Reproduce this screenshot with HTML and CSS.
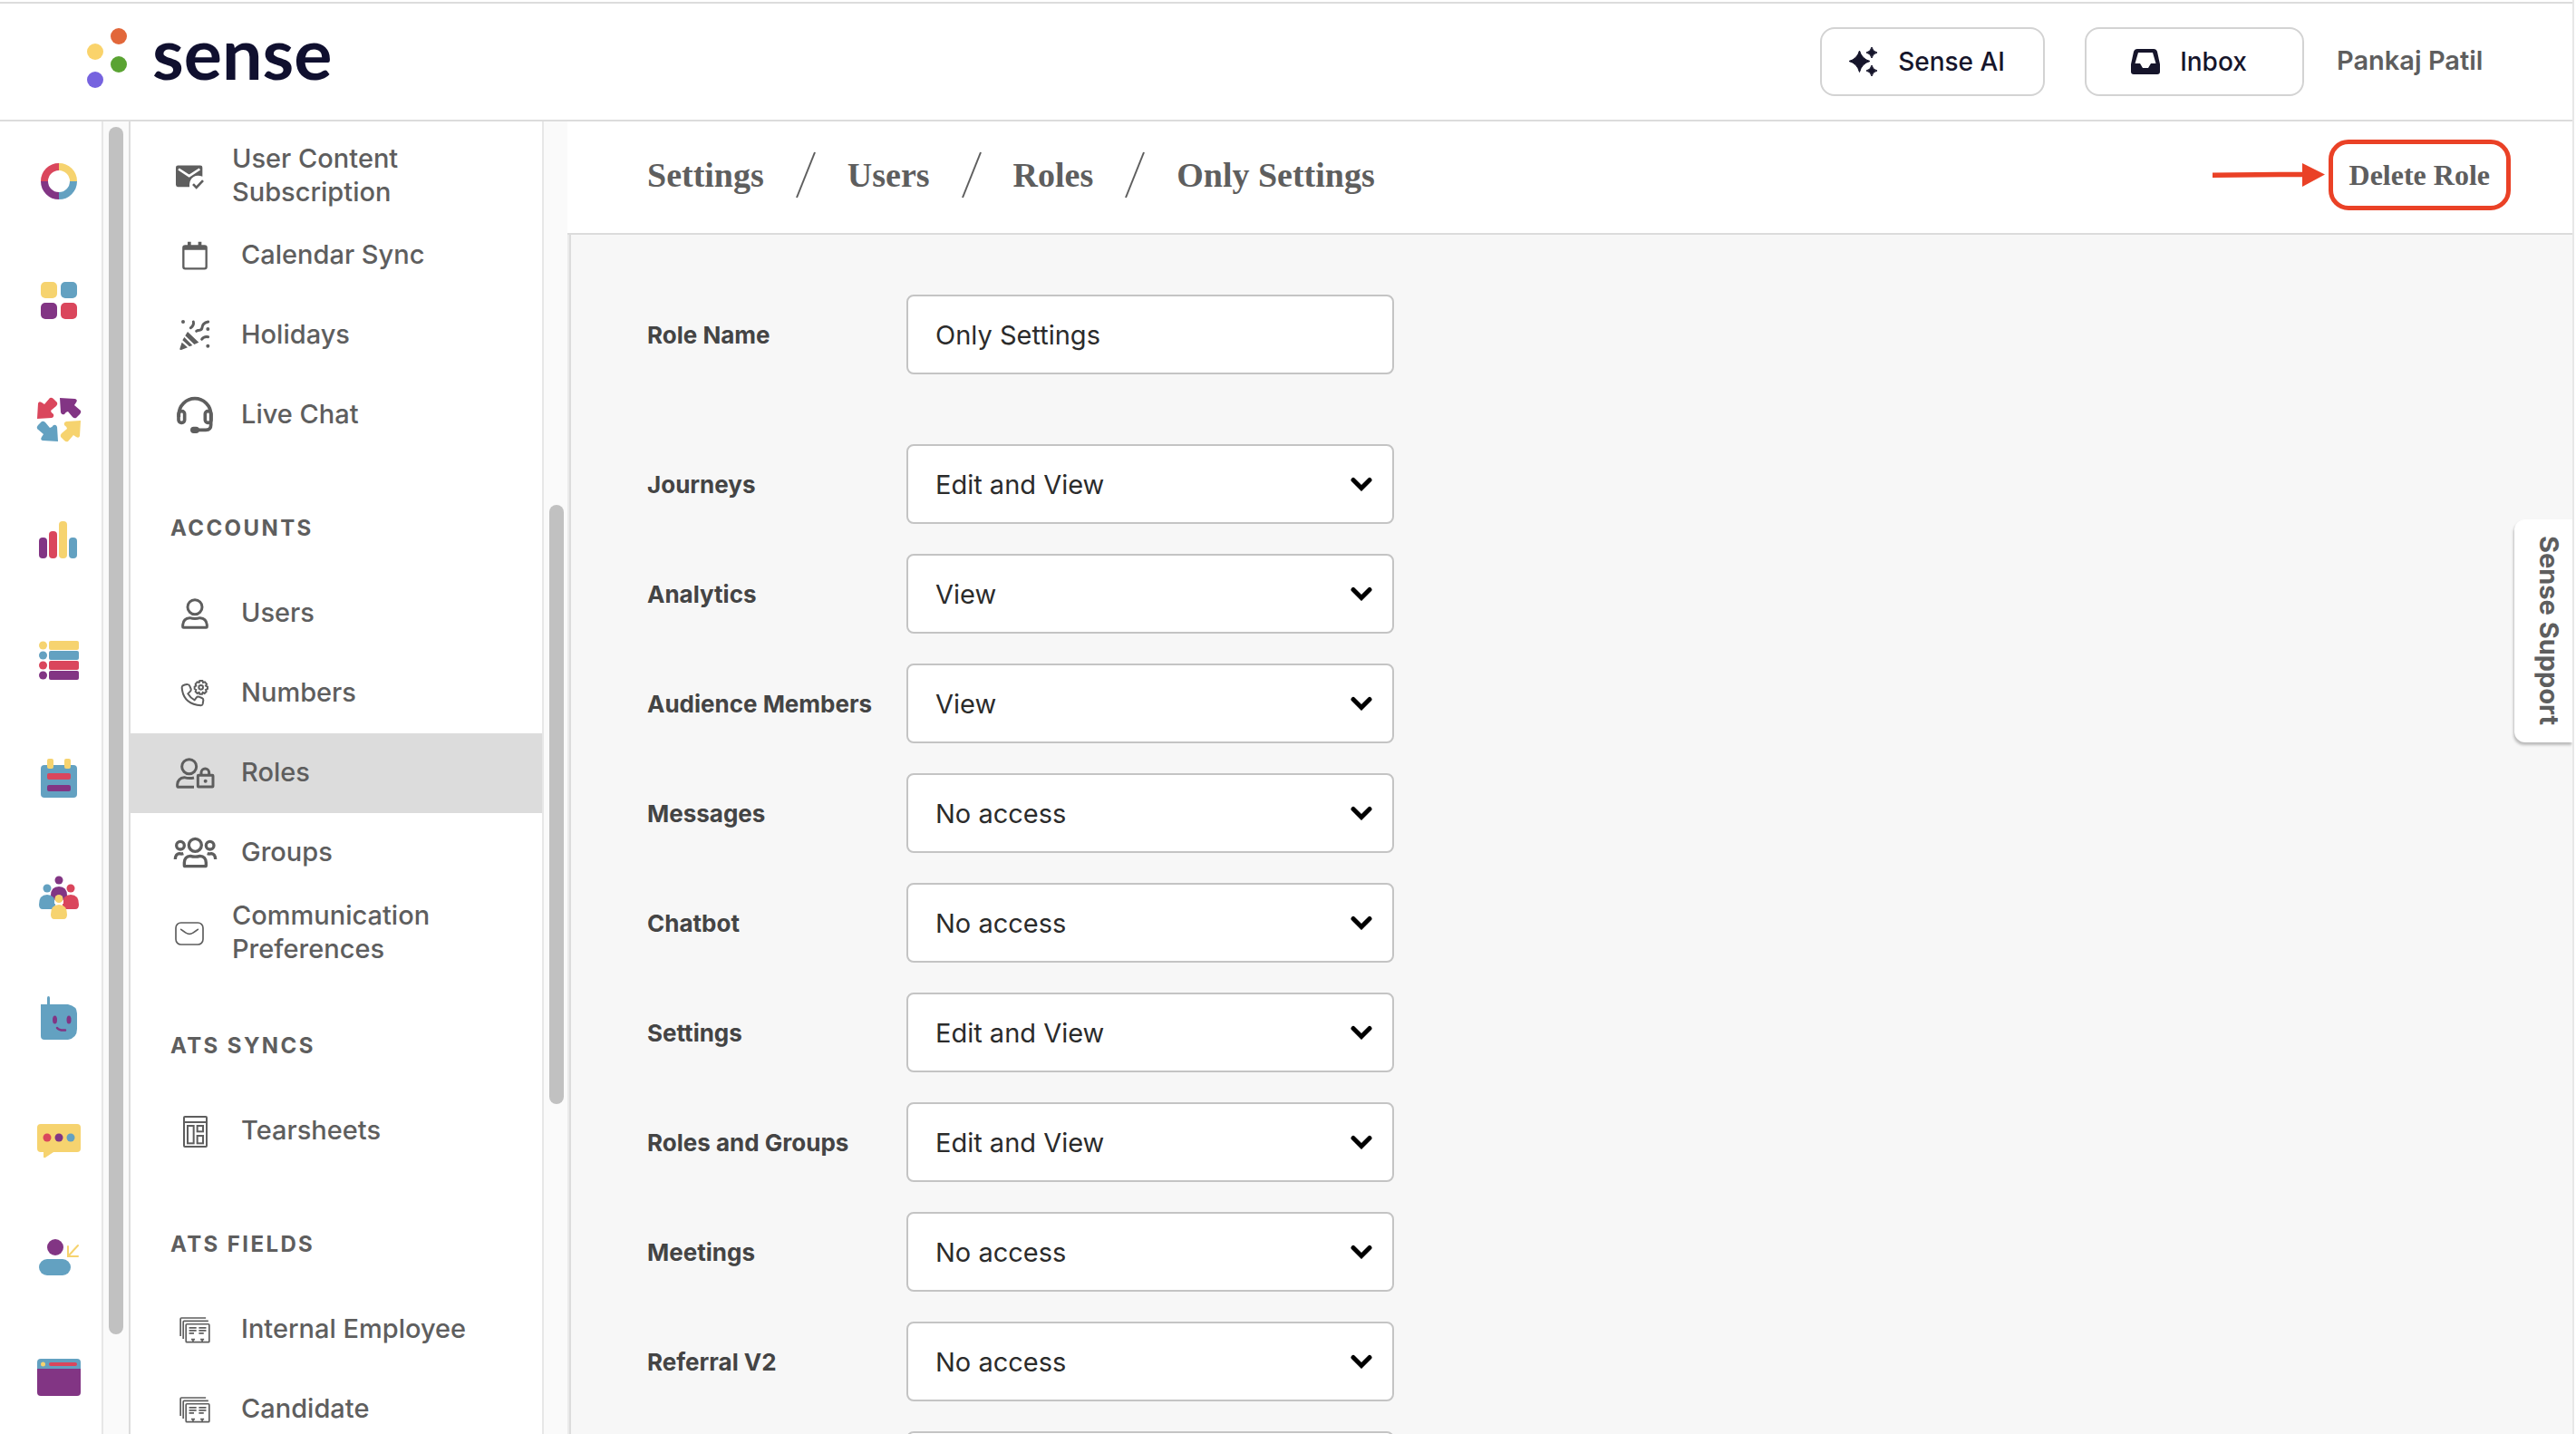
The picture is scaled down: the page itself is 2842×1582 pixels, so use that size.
FILE: index.html
```html
<!DOCTYPE html>
<html lang="en">
  <head>
    <meta charset="UTF-8" />
    <meta name="viewport" content="width=device-width, initial-scale=1.0" />
    <title>Sense - Only Settings</title>
    <link rel="stylesheet" href="styles.css">
  </head>
  <body>
    <svg class="symbols" aria-hidden="true">
      <symbol id="chevron" viewBox="0 0 24 16">
        <path d="M3 3.500 12 12.500 21 3.500" fill="none" stroke="#000" stroke-width="5" stroke-linecap="round" />
      </symbol>
      <symbol id="records" viewBox="0 0 100 86">
        <g fill="none" stroke="currentColor" stroke-width="5">
          <path d="M3 62V6q0-3 3-3h80M12 71V16q0-3 3-3h79" />
          <rect x="21" y="23" width="76" height="59" rx="3" />
          <path d="M31 35h24M31 44h24M31 53h16M63 35h24M63 44h24M63 53h16" />
          <path d="M38 73h12M44 73v9M68 73h12M74 73v9" />
        </g>
      </symbol>
      <path id="arrow" d="M14-1q2-1 4 1l4 4q1 2-1 4l-6 5q0 2 3 4 1 3-2 4L0 22 1 5q1-3 4-1l3 2z" />
    </svg>

    <div class="app">
      <header class="header">
        <a class="logo" href="#">
          <svg width="46" height="68" viewBox="0 0 46 68" aria-hidden="true">
            <circle cx="35" cy="10" r="9" fill="#e2673a" />
            <circle cx="9" cy="27" r="9" fill="#fad36b" />
            <circle cx="35" cy="41" r="9" fill="#5aa332" />
            <circle cx="9" cy="58" r="9" fill="#7663df" />
          </svg>
          <span class="logo-text">sense</span>
        </a>
        <div class="header-actions">
          <button type="button" class="header-btn">
            <svg width="32" height="32" viewBox="0 0 32 32" fill="#16152b" aria-hidden="true">
              <path d="M11.500 4q2.500 9 11.500 11.500-9 2.500-11.500 12-2.500-9.500-11.500-12 9-2.500 11.500-11.500z" stroke="#16152b" />
              <path d="M25 0q1 5 6 6-5 1-6 6-1-5-6-6 5-1 6-6zM25 20q1 5 6 6-5 1-6 6-1-5-6-6 5-1 6-6z" stroke="#16152b" />
            </svg>
            Sense AI
          </button>
          <button type="button" class="header-btn">
            <svg width="32" height="28" viewBox="0 0 32 28" aria-hidden="true">
              <path d="M7 0h18q3 0 4 3l3 14v8q0 3-3 3H3q-3 0-3-3v-8L3 3q1-3 4-3z" fill="#16152b" />
              <path d="M8 4h16l3.500 12H22l-3 5h-6l-3-5H4.500z" fill="#fff" />
            </svg>
            Inbox
          </button>
          <span class="user-name">Pankaj Patil</span>
        </div>
      </header>

      <div class="body">
        <nav class="rail" aria-label="Products">
          <a href="#" aria-label="Home">
            <svg viewBox="0 0 48 48" fill="none" stroke-width="8">
              <path d="M8 24a16 16 0 0 1 16-16" stroke="#da465c" />
              <path d="M24 8a16 16 0 0 1 16 16" stroke="#f6d36f" />
              <path d="M40 24a16 16 0 0 1-16 16" stroke="#63a1c1" />
              <path d="M24 40a16 16 0 0 1-16-16" stroke="#823584" />
            </svg>
          </a>
          <a href="#" aria-label="Dashboard">
            <svg viewBox="0 0 48 48">
              <rect x="4" y="3" width="18" height="18" rx="5" fill="#f6d36f" />
              <rect x="26" y="3" width="18" height="18" rx="5" fill="#63a1c1" />
              <rect x="4" y="26" width="18" height="18" rx="5" fill="#823584" />
              <rect x="26" y="26" width="18" height="18" rx="5" fill="#da465c" />
            </svg>
          </a>
          <a href="#" aria-label="Journeys">
            <svg viewBox="0 0 48 48">
              <use href="#arrow" fill="#da465c" />
              <use href="#arrow" fill="#823584" transform="rotate(90 24 23)" />
              <use href="#arrow" fill="#f6d36f" transform="rotate(180 24 23)" />
              <use href="#arrow" fill="#63a1c1" transform="rotate(270 24 23)" />
            </svg>
          </a>
          <a href="#" aria-label="Analytics">
            <svg viewBox="0 0 48 48">
              <rect x="2" y="21" width="9" height="23" rx="4" fill="#823584" />
              <rect x="13" y="14" width="9" height="30" rx="4" fill="#da465c" />
              <rect x="24" y="3" width="9" height="41" rx="4" fill="#f6d36f" />
              <rect x="35" y="21" width="9" height="23" rx="4" fill="#63a1c1" />
            </svg>
          </a>
          <a href="#" aria-label="Audience">
            <svg viewBox="0 0 48 48">
              <g fill="#f6d36f"><circle cx="6.500" cy="8" r="4.500" /><rect x="13" y="3" width="33" height="10" rx="2" /></g>
              <g fill="#63a1c1"><circle cx="6.500" cy="19" r="4.500" /><rect x="13" y="14" width="33" height="10" rx="2" /></g>
              <g fill="#da465c"><circle cx="6.500" cy="30" r="4.500" /><rect x="13" y="25" width="33" height="10" rx="2" /></g>
              <g fill="#823584"><circle cx="6.500" cy="41" r="4.500" /><rect x="13" y="36" width="33" height="10" rx="2" /></g>
            </svg>
          </a>
          <a href="#" aria-label="Meetings">
            <svg viewBox="0 0 48 48">
              <rect x="4" y="8" width="40" height="36" rx="4" fill="#63a1c1" />
              <rect x="11" y="1" width="7" height="11" rx="2" fill="#f6d36f" />
              <rect x="30" y="1" width="7" height="11" rx="2" fill="#f6d36f" />
              <rect x="11" y="17" width="26" height="7" rx="2" fill="#da465c" />
              <rect x="11" y="30" width="26" height="7" rx="2" fill="#823584" />
            </svg>
          </a>
          <a href="#" aria-label="Groups">
            <svg viewBox="0 0 48 48">
              <circle cx="24" cy="3" r="4.500" fill="#823584" />
              <path d="M15 26v-6q0-10 9-10t9 10v6z" fill="#823584" />
              <circle cx="11" cy="12" r="4.500" fill="#63a1c1" />
              <path d="M2 30q0-11 9-11t9 11q0 5-4 5H6q-4 0-4-5z" fill="#63a1c1" />
              <circle cx="37" cy="12" r="4.500" fill="#da465c" />
              <path d="M28 30q0-11 9-11t9 11q0 5-4 5H32q-4 0-4-5z" fill="#da465c" />
              <path d="M19 24q5 8 10 0v5H19z" fill="#fff" />
              <circle cx="24" cy="23.500" r="4.500" fill="#f6d36f" />
              <path d="M15 41q0-11 9-11t9 11q0 5-4 5H19q-4 0-4-5z" fill="#f6d36f" />
            </svg>
          </a>
          <a href="#" aria-label="Chatbot">
            <svg viewBox="0 0 48 48">
              <path d="M11 8V1q0-2 1.500-2T14 1v7h20q10 2 10 10v17q0 10-10 12H8q-4 0-4-4V8z" fill="#63a1c1" />
              <ellipse cx="19.500" cy="25" rx="2.500" ry="4.500" fill="#823584" />
              <ellipse cx="35" cy="25" rx="2.500" ry="4.500" fill="#823584" />
              <path d="M22 34q2 3 9 2.500" fill="none" stroke="#823584" stroke-width="2.500" stroke-linecap="round" />
            </svg>
          </a>
          <a href="#" aria-label="Messages">
            <svg viewBox="0 0 48 48">
              <path d="M4 8h40q4 0 4 4v23q0 4-4 4H18L9 45q-2 1-2-1v-5H4q-4 0-4-4V12q0-4 4-4z" fill="#f6d36f" />
              <circle cx="11" cy="23" r="4.500" fill="#da465c" />
              <circle cx="24" cy="23" r="4.500" fill="#823584" />
              <circle cx="37" cy="23" r="4.500" fill="#63a1c1" />
            </svg>
          </a>
          <a href="#" aria-label="Referrals">
            <svg viewBox="0 0 48 48">
              <circle cx="20" cy="12" r="9" fill="#823584" />
              <rect x="2" y="25" width="35" height="18" rx="9" fill="#63a1c1" />
              <path d="M34 11v11h11M34 22 45 10" fill="none" stroke="#f6d36f" stroke-width="2" stroke-linecap="round" />
            </svg>
          </a>
          <a href="#" aria-label="Pages">
            <svg viewBox="0 0 48 48">
              <path d="M0 14V7q0-4 4-4h40q4 0 4 4v7z" fill="#63a1c1" />
              <path d="M0 14h48v26q0 4-4 4H4q-4 0-4-4z" fill="#823584" />
              <circle cx="6.500" cy="9" r="2.500" fill="#f6d36f" />
              <rect x="13" y="7" width="31" height="4" rx="2" fill="#da465c" />
            </svg>
          </a>
        </nav>
        <div class="scroll-track rail-track"><div class="scroll-thumb"></div></div>

        <nav class="sidebar" aria-label="Settings">
          <a class="item two-line" href="#">
            <span class="icon">
              <svg width="31" height="27" viewBox="0 0 93 80">
                <path d="M7 1h74q7 0 7 7v30q-16-7-30 1-14 9-13 33H7q-7 0-7-7V8q0-7 7-7z" fill="currentColor" />
                <path d="M9 13 44 36 79 13" fill="none" stroke="#fff" stroke-width="8" />
                <path d="M57 63 68 74 90 51" fill="none" stroke="currentColor" stroke-width="8" />
              </svg>
            </span>
            <span>User Content<br>Subscription</span>
          </a>
          <a class="item" href="#">
            <span class="icon">
              <svg width="28" height="32" viewBox="0 0 84 94">
                <rect x="4" y="15" width="76" height="75" rx="6" fill="none" stroke="currentColor" stroke-width="7" />
                <path d="M4 14h76v14H4zM18 1h11v15H18zM53 1h11v15H53z" fill="currentColor" />
              </svg>
            </span>
            Calendar Sync
          </a>
          <a class="item" href="#">
            <span class="icon">
              <svg width="34" height="34" viewBox="0 0 102 102">
                <path d="M27 39 64 74 49 81 19 52zM16 57 43 84 33 88 10 67zM8 74 27 91 6 99Q-1 100 2 92z" fill="currentColor" />
                <g fill="none" stroke="currentColor" stroke-width="9" stroke-linecap="round">
                  <path d="M46 6q3 12-9 20M56 37q5-3 10-3 8-1 9-9 1-15 20-19M74 64q6-10 21-8" />
                </g>
                <circle cx="12" cy="6" r="6" fill="currentColor" />
                <circle cx="94" cy="30" r="6" fill="currentColor" />
                <circle cx="94" cy="86" r="6" fill="currentColor" />
              </svg>
            </span>
            Holidays
          </a>
          <a class="item" href="#">
            <span class="icon">
              <svg width="40" height="40" viewBox="0 0 120 120">
                <g fill="none" stroke="currentColor" stroke-width="11">
                  <path d="M7 66V58a53 53 0 0 1 106 0V92q0 17-17 17H60" />
                  <rect x="6" y="47" width="20" height="38" rx="9" />
                  <rect x="94" y="47" width="20" height="38" rx="9" />
                </g>
                <rect x="45" y="98" width="30" height="22" rx="11" fill="currentColor" />
              </svg>
            </span>
            Live Chat
          </a>

          <h2 class="section">Accounts</h2>
          <a class="item" href="#">
            <span class="icon">
              <svg width="30" height="34" viewBox="0 0 90 102" fill="none" stroke="currentColor" stroke-width="9">
                <circle cx="45" cy="29" r="24" />
                <path d="M5 94V88Q7 66 28 65q17 5 34 0 21 1 23 23v6q0 3-3 3H8q-3 0-3-3z" />
              </svg>
            </span>
            Users
          </a>
          <a class="item" href="#">
            <span class="icon">
              <svg width="30" height="30" viewBox="0 0 90 90" fill="none" stroke="currentColor" stroke-width="6">
                <path d="M4 20q8-6 17-5 5 0 7 6l4 9q1 5-2 8l-8 8q8 14 22 21l6-8q3-4 8-3l10 4q5 2 5 7l-2 13q-1 5-6 5Q6 80 2 26q0-4 2-6z" />
                <path d="M61 3h9l2 6 6-2 6 7-3 6 6 3v7l-6 3 2 6-6 6-6-3-2 5h-8l-2-5-6 3-6-6 2-6-5-3v-7l5-3-2-6 6-7 6 2z" />
                <circle cx="65" cy="25" r="7" />
              </svg>
            </span>
            Numbers
          </a>
          <a class="item active" href="#" aria-current="page">
            <span class="icon">
              <svg width="43" height="34" viewBox="0 0 129 102" fill="none" stroke="currentColor" stroke-width="9">
                <circle cx="44" cy="29" r="24" />
                <path d="M60 97H9q-4 0-4-4v-5Q7 67 28 65q16 5 32 1" />
                <path d="M84 58V49a13 13 0 0 1 26 0v9" />
                <rect x="73" y="58" width="50" height="38" rx="2" />
                <circle cx="98" cy="77" r="6" fill="currentColor" stroke="none" />
              </svg>
            </span>
            Roles
          </a>
          <a class="item" href="#">
            <span class="icon">
              <svg width="47" height="34" viewBox="0 0 141 102" fill="none" stroke="currentColor" stroke-width="10">
                <circle cx="70" cy="25" r="21" />
                <path d="M34 92V83Q35 62 54 61q16 5 32 0 19 1 20 22v9q0 3-3 3H37q-3 0-3-3z" />
                <circle cx="21" cy="26" r="13" />
                <circle cx="119" cy="26" r="13" />
                <path d="M4 72Q5 54 17 53q8 2 14 0M137 72q-1-18-13-19-8 2-14 0" />
              </svg>
            </span>
            Groups
          </a>
          <a class="item two-line" href="#">
            <span class="icon">
              <svg width="32" height="26" viewBox="0 0 96 78" fill="none" stroke="currentColor" stroke-width="5">
                <rect x="3" y="3" width="90" height="72" rx="17" />
                <path d="M20 25q18 13 22 14 6 2 12 0 4-1 22-14" stroke-linecap="round" />
              </svg>
            </span>
            <span>Communication<br>Preferences</span>
          </a>

          <h2 class="section">ATS Syncs</h2>
          <a class="item" href="#">
            <span class="icon">
              <svg width="27" height="35" viewBox="0 0 81 105" fill="none" stroke="currentColor" stroke-width="6">
                <rect x="3" y="3" width="75" height="99" rx="3" />
                <path d="M3 21h75" />
                <rect x="15" y="33" width="20" height="58" />
                <rect x="47" y="33" width="19" height="19" />
                <rect x="47" y="66" width="19" height="25" />
              </svg>
            </span>
            Tearsheets
          </a>

          <h2 class="section">ATS Fields</h2>
          <a class="item" href="#">
            <span class="icon"><svg width="34" height="29"><use href="#records" /></svg></span>
            Internal Employee
          </a>
          <a class="item" href="#">
            <span class="icon"><svg width="34" height="29"><use href="#records" /></svg></span>
            Candidate
          </a>
        </nav>
        <div class="scroll-track sidebar-track"><div class="scroll-thumb"></div></div>

        <main class="main">
          <div class="title-bar">
            <nav class="breadcrumb" aria-label="Breadcrumb">
              <a href="#">Settings</a>
              <svg width="22" height="52" viewBox="0 0 22 52"><path d="M21 1 1 51" /></svg>
              <a href="#">Users</a>
              <svg width="22" height="52" viewBox="0 0 22 52"><path d="M21 1 1 51" /></svg>
              <a href="#">Roles</a>
              <svg width="22" height="52" viewBox="0 0 22 52"><path d="M21 1 1 51" /></svg>
              <span>Only Settings</span>
            </nav>
            <div class="delete">
              <svg width="124" height="26" viewBox="0 0 124 26" fill="#ea4126" aria-hidden="true">
                <path d="M0 10.500 99 9.500V15L0 16zM99 0 124 12.500 99 26z" />
              </svg>
              <button type="button" class="delete-btn">Delete Role</button>
            </div>
          </div>

          <form class="form">
            <div class="row row-name">
              <label for="role-name">Role Name</label>
              <input class="field" id="role-name" type="text" value="Only Settings">
            </div>
            <div class="row">
              <label for="journeys">Journeys</label>
              <div class="select">
                <select class="field" id="journeys"><option>No access</option><option>View</option><option selected>Edit and View</option></select>
                <svg><use href="#chevron" /></svg>
              </div>
            </div>
            <div class="row">
              <label for="analytics">Analytics</label>
              <div class="select">
                <select class="field" id="analytics"><option>No access</option><option selected>View</option><option>Edit and View</option></select>
                <svg><use href="#chevron" /></svg>
              </div>
            </div>
            <div class="row">
              <label for="audience">Audience Members</label>
              <div class="select">
                <select class="field" id="audience"><option>No access</option><option selected>View</option><option>Edit and View</option></select>
                <svg><use href="#chevron" /></svg>
              </div>
            </div>
            <div class="row">
              <label for="messages">Messages</label>
              <div class="select">
                <select class="field" id="messages"><option selected>No access</option><option>View</option><option>Edit and View</option></select>
                <svg><use href="#chevron" /></svg>
              </div>
            </div>
            <div class="row">
              <label for="chatbot">Chatbot</label>
              <div class="select">
                <select class="field" id="chatbot"><option selected>No access</option><option>View</option><option>Edit and View</option></select>
                <svg><use href="#chevron" /></svg>
              </div>
            </div>
            <div class="row">
              <label for="settings">Settings</label>
              <div class="select">
                <select class="field" id="settings"><option>No access</option><option>View</option><option selected>Edit and View</option></select>
                <svg><use href="#chevron" /></svg>
              </div>
            </div>
            <div class="row">
              <label for="roles">Roles and Groups</label>
              <div class="select">
                <select class="field" id="roles"><option>No access</option><option>View</option><option selected>Edit and View</option></select>
                <svg><use href="#chevron" /></svg>
              </div>
            </div>
            <div class="row">
              <label for="meetings">Meetings</label>
              <div class="select">
                <select class="field" id="meetings"><option selected>No access</option><option>View</option><option>Edit and View</option></select>
                <svg><use href="#chevron" /></svg>
              </div>
            </div>
            <div class="row">
              <label for="referral">Referral V2</label>
              <div class="select">
                <select class="field" id="referral"><option selected>No access</option><option>View</option><option>Edit and View</option></select>
                <svg><use href="#chevron" /></svg>
              </div>
            </div>
            <div class="row row-unlabelled">
              <div class="select">
                <select class="field" aria-label="Pages"><option></option><option>No access</option><option>View</option><option>Edit and View</option></select>
                <svg><use href="#chevron" /></svg>
              </div>
            </div>
          </form>
        </main>
      </div>

      <button type="button" class="support">Sense Support</button>
    </div>
  </body>
</html>
```
FILE: styles.css
```css
* {
  box-sizing: border-box;
}
body {
  margin: 0;
  background-color: #fff;
  color: #5e5e5e;
  font-family: Inter, "Liberation Sans", sans-serif;
  font-size: 29px;
}
a {
  color: inherit;
  text-decoration: none;
}
button {
  background: none;
  cursor: pointer;
  font-family: inherit;
}
svg {
  display: block;
  flex-shrink: 0;
  overflow: visible;
}
.symbols {
  position: absolute;
  width: 0;
  height: 0;
  overflow: hidden;
}
.app {
  position: relative;
  display: flex;
  flex-direction: column;
  height: 100vh;
  padding-top: 2px;
  margin-right: 2px;
  border-right: 2px solid #e7e7e7;
  overflow: hidden;
}

/* header */
.header {
  display: flex;
  align-items: center;
  justify-content: space-between;
  height: 132px;
  flex-shrink: 0;
  padding: 0 96px;
  border-top: 2px solid #dcdcdc;
  border-bottom: 2px solid #dcdcdc;
}
.logo {
  display: flex;
  align-items: center;
  gap: 26px;
  height: 120px;
  padding-bottom: 8px;
  color: #10102f;
}
.logo-text {
  font-family: Lato, sans-serif;
  font-size: 79px;
  font-weight: 700;
  line-height: 90px;
  padding-bottom: 12px;
}
.header-actions {
  display: flex;
  align-items: center;
}
.header-btn {
  display: flex;
  align-items: center;
  justify-content: center;
  gap: 22px;
  min-width: 242px;
  height: 76px;
  margin-right: 44px;
  padding: 0 42px 0 30px;
  border: 2px solid #d3d3d3;
  border-radius: 16px;
  color: #16152b;
  font-size: 28px;
  font-weight: 500;
}
.header-btn + .user-name {
  margin-left: -8px;
}
.user-name {
  min-width: 164px;
  padding-bottom: 4px;
  font-weight: 600;
}

.body {
  display: flex;
  flex: 1;
  min-height: 0;
}

/* product rail */
.rail {
  display: flex;
  flex-direction: column;
  gap: 84px;
  width: 112px;
  flex-shrink: 0;
  padding: 42px 0 0 41px;
  overflow: hidden;
}
.rail svg {
  width: 48px;
  height: 48px;
}

.scroll-track {
  display: grid;
  flex-shrink: 0;
  padding: 0 6px;
  background-color: #fafafa;
  border-left: 2px solid #e7e7e7;
}
.rail-track {
  width: 32px;
  grid-template-rows: 6fr 1332fr 110fr;
  border-right: 2px solid #dcdcdc;
}
.sidebar-track {
  width: 28px;
  grid-template-rows: 423fr 661fr 364fr;
}
.scroll-thumb {
  grid-row: 2;
  width: 16px;
  background-color: #c1c1c1;
  border-radius: 8px;
}

/* settings menu */
.sidebar {
  width: 454px;
  flex-shrink: 0;
  padding-top: 16px;
  overflow: hidden;
  font-weight: 500;
}
.item {
  display: flex;
  align-items: center;
  gap: 26px;
  height: 88px;
  padding: 0 20px 4px 46px;
  line-height: 37px;
}
.icon {
  display: flex;
  justify-content: center;
  width: 50px;
  padding-top: 4px;
}
.two-line {
  gap: 22px;
  padding: 0 20px 2px 40px;
}
.active {
  background-color: #dcdcdc;
}
.section {
  margin: 0;
  padding: 63px 44px 32px;
  font-size: 24px;
  font-weight: 700;
  line-height: 36px;
  letter-spacing: 0.1em;
  text-transform: uppercase;
}

/* page */
.main {
  display: flex;
  flex-direction: column;
  flex: 1;
  min-width: 0;
}
.title-bar {
  display: flex;
  align-items: center;
  justify-content: space-between;
  height: 125px;
  flex-shrink: 0;
  padding: 0 68px 5px 88px;
  border-bottom: 2px solid #dcdcdc;
  font-family: "Liberation Serif", serif;
  font-weight: 700;
}
.breadcrumb {
  display: flex;
  align-items: center;
  gap: 35px;
  font-size: 38px;
}
.breadcrumb path {
  stroke: #5e5e5e;
  stroke-width: 2;
}
.delete {
  display: flex;
  align-items: center;
  gap: 4px;
}
.delete-btn {
  height: 78px;
  padding: 0 18px;
  border: 5px solid #ea4126;
  border-radius: 22px;
  color: #5e5e5e;
  font-size: 32px;
  font-weight: 700;
}

.form {
  flex: 1;
  min-height: 0;
  padding: 66px 84px 0 86px;
  background-color: #f7f7f7;
  border-left: 2px solid #ebebeb;
  box-shadow: inset 2px 0 #dcdcdc;
  overflow: hidden;
}
.row {
  display: flex;
  align-items: center;
  margin-bottom: 33px;
}
.row-name {
  margin-bottom: 77px;
}
.row label {
  width: 286px;
  color: #444;
  font-size: 26px;
  font-weight: 700;
}
.row-unlabelled {
  padding-left: 286px;
}
.field {
  width: 538px;
  height: 88px;
  padding: 0 30px;
  background-color: #fff;
  border: 2px solid #c4c4c4;
  border-radius: 8px;
  color: #2b2b2b;
  font-family: inherit;
  font-size: 29px;
  appearance: none;
}
.select {
  display: grid;
  align-items: center;
}
.select > * {
  grid-area: 1 / 1;
}
.select svg {
  justify-self: end;
  width: 24px;
  height: 16px;
  margin-right: 24px;
  pointer-events: none;
}

/* help tab pinned to the window edge */
.support {
  position: absolute;
  top: 573px;
  right: 0;
  width: 64px;
  height: 246px;
  padding: 0 0 0 12px;
  background-color: #fff;
  border: 0;
  border-radius: 12px 0 0 12px;
  box-shadow: -1px 3px 3px #bbb;
  color: #5e5e5e;
  font-size: 29px;
  font-weight: 700;
  writing-mode: vertical-rl;
}
```
